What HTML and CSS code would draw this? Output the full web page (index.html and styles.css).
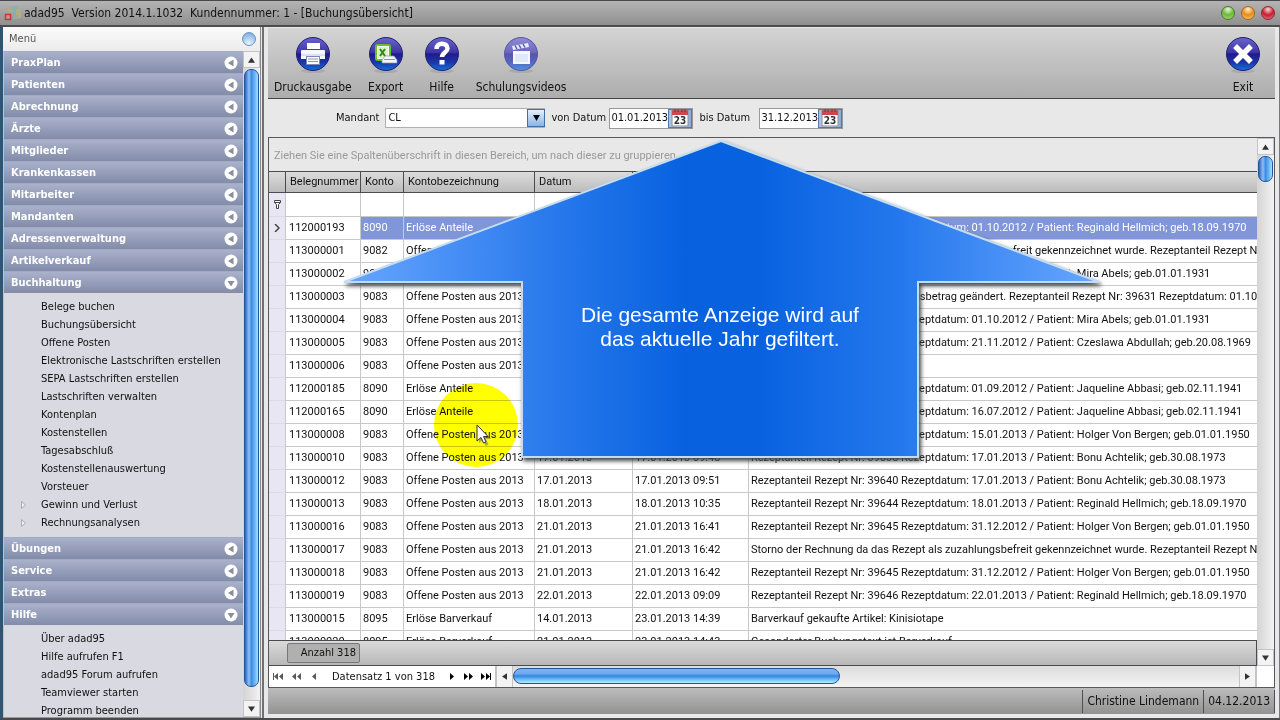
FILE: index.html
```html
<!DOCTYPE html>
<html lang="de">
<head>
<meta charset="utf-8">
<title>adad95 - Buchungsübersicht</title>
<link rel="stylesheet" href="styles.css">
</head>
<body>
<svg class="defs" aria-hidden="true">
  <defs>
    <linearGradient id="orb" x1="0" y1="0" x2="0" y2="1">
      <stop offset="0" stop-color="#6a66c8"/><stop offset=".45" stop-color="#3d35a6"/>
      <stop offset=".5" stop-color="#211a8c"/><stop offset=".75" stop-color="#1a36a8"/><stop offset="1" stop-color="#1670d8"/>
    </linearGradient>
    <symbol id="left" viewBox="0 0 14 14"><circle cx="7" cy="7" r="6.500" fill="#fff"/><path d="M9.500 3.500v7L4 7z" fill="#8a8e9c"/></symbol>
    <symbol id="down" viewBox="0 0 14 14"><circle cx="7" cy="7" r="6.500" fill="#fff"/><path d="M3.500 5h7L7 10.500z" fill="#8a8e9c"/></symbol>
    <symbol id="cal" viewBox="0 0 18 18">
      <rect x="1" y="1.500" width="16" height="15.500" fill="#fff" stroke="#8a8a92"/>
      <path d="M1 1.500h16v4.500H1z" fill="#d0464a"/><path d="M4 0v3M7 0v3M11 0v3M14 0v3" stroke="#7d3034"/>
      <text x="9" y="15" text-anchor="middle" class="cal-text">23</text>
    </symbol>
  </defs>
</svg>

<header class="titlebar">
  <svg class="logo" width="18" height="18" viewBox="0 0 18 18"><path d="M6 3l7-1 1 7H6z" fill="#84b3b4"/><path d="M12 5h5v9h-5z" fill="#b5ae84"/><path d="M3 3h5v5H3z" fill="#c0a488"/><rect x="1.500" y="10.500" width="5" height="5" fill="#b99" stroke="#c23a3a" stroke-width="1.500"/><path d="M9 11h5v4H9z" fill="#93ac9c"/></svg>
  <h1>adad95&nbsp; Version 2014.1.1032&nbsp; Kundennummer: 1 - [Buchungsübersicht]</h1>
  <button class="dot green" aria-label="Minimieren"></button>
  <button class="dot amber" aria-label="Maximieren"></button>
  <button class="dot red" aria-label="Schließen"></button>
</header>

<div class="workspace">
  <aside class="sidebar">
    <div class="side-head"><span>Menü</span><span class="pin"></span></div>
    <div class="side-body">
      <nav class="menu">
        <button class="group">PraxPlan<svg><use href="#left"/></svg></button>
        <button class="group">Patienten<svg><use href="#left"/></svg></button>
        <button class="group">Abrechnung<svg><use href="#left"/></svg></button>
        <button class="group">Ärzte<svg><use href="#left"/></svg></button>
        <button class="group">Mitglieder<svg><use href="#left"/></svg></button>
        <button class="group">Krankenkassen<svg><use href="#left"/></svg></button>
        <button class="group">Mitarbeiter<svg><use href="#left"/></svg></button>
        <button class="group">Mandanten<svg><use href="#left"/></svg></button>
        <button class="group">Adressenverwaltung<svg><use href="#left"/></svg></button>
        <button class="group">Artikelverkauf<svg><use href="#left"/></svg></button>
        <button class="group">Buchhaltung<svg><use href="#down"/></svg></button>
        <ul>
          <li><a href="#">Belege buchen</a></li>
          <li><a href="#">Buchungsübersicht</a></li>
          <li><a href="#">Offene Posten</a></li>
          <li><a href="#">Elektronische Lastschriften erstellen</a></li>
          <li><a href="#">SEPA Lastschriften erstellen</a></li>
          <li><a href="#">Lastschriften verwalten</a></li>
          <li><a href="#">Kontenplan</a></li>
          <li><a href="#">Kostenstellen</a></li>
          <li><a href="#">Tagesabschluß</a></li>
          <li><a href="#">Kostenstellenauswertung</a></li>
          <li><a href="#">Vorsteuer</a></li>
          <li class="sub"><svg width="5" height="8" viewBox="0 0 5 8"><path d="M.5.5v7L4.500 4z" fill="#eee" stroke="#aaadb5"/></svg><a href="#">Gewinn und Verlust</a></li>
          <li class="sub"><svg width="5" height="8" viewBox="0 0 5 8"><path d="M.5.5v7L4.500 4z" fill="#eee" stroke="#aaadb5"/></svg><a href="#">Rechnungsanalysen</a></li>
        </ul>
        <button class="group">Übungen<svg><use href="#left"/></svg></button>
        <button class="group">Service<svg><use href="#left"/></svg></button>
        <button class="group">Extras<svg><use href="#left"/></svg></button>
        <button class="group">Hilfe<svg><use href="#down"/></svg></button>
        <ul>
          <li><a href="#">Über adad95</a></li>
          <li><a href="#">Hilfe aufrufen F1</a></li>
          <li><a href="#">adad95 Forum aufrufen</a></li>
          <li><a href="#">Teamviewer starten</a></li>
          <li><a href="#">Programm beenden</a></li>
        </ul>
      </nav>
      <div class="vscroll">
        <button aria-label="Nach oben"><svg width="7" height="6" viewBox="0 0 8 6"><path d="M0 6h8L4 0z"/></svg></button>
        <div class="track"><div class="thumb long"></div></div>
        <button aria-label="Nach unten"><svg width="7" height="6" viewBox="0 0 8 6"><path d="M0 0h8L4 6z"/></svg></button>
      </div>
    </div>
  </aside>

  <main class="content">
    <div class="toolbar">
      <button class="tool"><svg width="36" height="38" viewBox="0 0 36 38"><ellipse cx="18" cy="35" rx="12" ry="2" fill="#aaa"/><circle cx="18" cy="18" r="16.500" fill="url(#orb)" stroke="#232070"/>
        <rect x="12" y="7" width="13" height="6" fill="#fff"/><path d="M7 14h22q1 0 1 1v8H6v-8q0-1 1-1z" fill="#f4f7fb"/><path d="M6 19h24" stroke="#c3cbe0"/><rect x="11.500" y="20.500" width="13" height="8" fill="#fff" stroke="#7b88b8"/><path d="M13 23h10M13 25.500h10" stroke="#8a93b0"/></svg>Druckausgabe</button>
      <button class="tool"><svg width="36" height="38" viewBox="0 0 36 38"><ellipse cx="18" cy="35" rx="12" ry="2" fill="#aaa"/><circle cx="18" cy="18" r="16.500" fill="url(#orb)" stroke="#232070"/>
        <rect x="8" y="9" width="14" height="15" rx="1.500" fill="#fff" stroke="#62c428" stroke-width="2"/><path d="M10 11h10v11H10z" fill="#d9f5c0"/><path d="M12 13l5 7M17 13l-5 7" stroke="#2a8a1c" stroke-width="2"/><path d="M14 24l3-4h9l3 4v3H14z" fill="#f5f5f5" stroke="#8893b5" stroke-width=".7"/><path d="M16 23.500h11" stroke="#8893b5"/></svg>Export</button>
      <button class="tool"><svg width="36" height="38" viewBox="0 0 36 38"><ellipse cx="18" cy="35" rx="12" ry="2" fill="#aaa"/><circle cx="18" cy="18" r="16.500" fill="url(#orb)" stroke="#232070"/>
        <path d="M12.500 13c0-7 11-7 11-.5 0 4-5.500 4-5.500 8.500" fill="none" stroke="#fff" stroke-width="4.500"/><path d="M15.500 24h5v4.500h-5z" fill="#fff"/></svg>Hilfe</button>
      <button class="tool"><svg width="36" height="38" viewBox="0 0 36 38"><ellipse cx="18" cy="35" rx="12" ry="2" fill="#aaa"/><circle cx="18" cy="18" r="16.500" fill="url(#orb)" stroke="#5a58a8"/><circle cx="18" cy="18" r="16" fill="#fff" opacity=".25"/>
        <path d="M10 15h17v13H10z" fill="#f5f7ff"/><path d="M12 18h13v8H12z" fill="#dfe8fb"/><path d="M9 10l16-3 1 4-16 3z" fill="#e8eaff"/><path d="M12 9.500l2 3.500M16 9l2 3.500M20 8l2 3.500" stroke="#5b57b5" stroke-width="1.500"/></svg>Schulungsvideos</button>
      <span class="spacer"></span>
      <button class="tool"><svg width="36" height="38" viewBox="0 0 36 38"><ellipse cx="18" cy="35" rx="12" ry="2" fill="#aaa"/><circle cx="18" cy="18" r="16.500" fill="url(#orb)" stroke="#232070"/>
        <path d="M12 12l12 12M24 12L12 24" stroke="#fff" stroke-width="5.500" stroke-linecap="square"/></svg>Exit</button>
    </div>

    <form class="filters">
      <label for="mandant">Mandant</label>
      <span class="combo"><select id="mandant"><option>CL</option></select><span class="drop"><svg width="7" height="6" viewBox="0 0 8 7"><path d="M0 0h8L4 7z"/></svg></span></span>
      <label for="von" class="von">von Datum</label>
      <span class="date"><input id="von" value="01.01.2013"><button type="button" aria-label="Kalender"><svg width="18" height="18"><use href="#cal"/></svg></button></span>
      <label for="bis" class="bis">bis Datum</label>
      <span class="date"><input id="bis" value="31.12.2013"><button type="button" aria-label="Kalender"><svg width="18" height="18"><use href="#cal"/></svg></button></span>
    </form>

    <section class="grid">
      <div class="grid-main">
        <div class="grid-left">
          <div class="group-panel">Ziehen Sie eine Spaltenüberschrift in diesen Bereich, um nach dieser zu gruppieren</div>
          <div class="table-wrap">
            <table>
              <colgroup><col class="c-ind"><col class="c-beleg"><col class="c-konto"><col class="c-bez"><col class="c-datum"><col class="c-zeit"><col></colgroup>
              <thead><tr><th></th><th>Belegnummer</th><th>Konto</th><th>Kontobezeichnung</th><th>Datum</th><th></th><th></th></tr></thead>
              <tbody>
                <tr class="filter"><td><svg width="7" height="9" viewBox="0 0 7 9"><path d="M.5.5h6v2l-2 2v4h-2v-4l-2-2zM.5 2.500h6" fill="#fff" stroke="#444"/></svg></td><td></td><td></td><td></td><td></td><td></td><td></td></tr>
                <tr class="selected"><td><svg width="6" height="8" viewBox="0 0 6 8"><path d="M1 0l4 4-4 4" fill="none" stroke="#444" stroke-width="1.500"/></svg></td><td>112000193</td><td>8090</td><td>Erlöse Anteile</td><td></td><td></td><td>Rezeptanteil Rezept Nr: 39631 Rezeptdatum: 01.10.2012 / Patient: Reginald Hellmich; geb.18.09.1970</td></tr>
                <tr><td></td><td>113000001</td><td>9082</td><td>Offene Posten aus 2012</td><td></td><td></td><td>Storno der Rechnung da das Rezept als zuzahlungsbefreit gekennzeichnet wurde. Rezeptanteil Rezept Nr: 39631</td></tr>
                <tr><td></td><td>113000002</td><td>9083</td><td>Offene Posten aus 2013</td><td></td><td></td><td>Rezeptanteil Rezept Nr: 39631 Rezeptdatum: 01.10.2012 / Patient: Mira Abels; geb.01.01.1931</td></tr>
                <tr><td></td><td>113000003</td><td>9083</td><td>Offene Posten aus 2013</td><td></td><td></td><td>Storno der Rechnung da Rechnungsbetrag geändert. Rezeptanteil Rezept Nr: 39631 Rezeptdatum: 01.10.2012</td></tr>
                <tr><td></td><td>113000004</td><td>9083</td><td>Offene Posten aus 2013</td><td></td><td></td><td>Rezeptanteil Rezept Nr: 39631 Rezeptdatum: 01.10.2012 / Patient: Mira Abels; geb.01.01.1931</td></tr>
                <tr><td></td><td>113000005</td><td>9083</td><td>Offene Posten aus 2013</td><td></td><td></td><td>Rezeptanteil Rezept Nr: 39632 Rezeptdatum: 21.11.2012 / Patient: Czeslawa Abdullah; geb.20.08.1969</td></tr>
                <tr><td></td><td>113000006</td><td>9083</td><td>Offene Posten aus 2013</td><td></td><td></td><td></td></tr>
                <tr><td></td><td>112000185</td><td>8090</td><td>Erlöse Anteile</td><td></td><td></td><td>Rezeptanteil Rezept Nr: 39633 Rezeptdatum: 01.09.2012 / Patient: Jaqueline Abbasi; geb.02.11.1941</td></tr>
                <tr><td></td><td>112000165</td><td>8090</td><td>Erlöse Anteile</td><td></td><td></td><td>Rezeptanteil Rezept Nr: 39634 Rezeptdatum: 16.07.2012 / Patient: Jaqueline Abbasi; geb.02.11.1941</td></tr>
                <tr><td></td><td>113000008</td><td>9083</td><td>Offene Posten aus 2013</td><td></td><td></td><td>Rezeptanteil Rezept Nr: 39637 Rezeptdatum: 15.01.2013 / Patient: Holger Von Bergen; geb.01.01.1950</td></tr>
                <tr><td></td><td>113000010</td><td>9083</td><td>Offene Posten aus 2013</td><td>17.01.2013</td><td>17.01.2013 09:48</td><td>Rezeptanteil Rezept Nr: 39638 Rezeptdatum: 17.01.2013 / Patient: Bonu Achtelik; geb.30.08.1973</td></tr>
                <tr><td></td><td>113000012</td><td>9083</td><td>Offene Posten aus 2013</td><td>17.01.2013</td><td>17.01.2013 09:51</td><td>Rezeptanteil Rezept Nr: 39640 Rezeptdatum: 17.01.2013 / Patient: Bonu Achtelik; geb.30.08.1973</td></tr>
                <tr><td></td><td>113000013</td><td>9083</td><td>Offene Posten aus 2013</td><td>18.01.2013</td><td>18.01.2013 10:35</td><td>Rezeptanteil Rezept Nr: 39644 Rezeptdatum: 18.01.2013 / Patient: Reginald Hellmich; geb.18.09.1970</td></tr>
                <tr><td></td><td>113000016</td><td>9083</td><td>Offene Posten aus 2013</td><td>21.01.2013</td><td>21.01.2013 16:41</td><td>Rezeptanteil Rezept Nr: 39645 Rezeptdatum: 31.12.2012 / Patient: Holger Von Bergen; geb.01.01.1950</td></tr>
                <tr><td></td><td>113000017</td><td>9083</td><td>Offene Posten aus 2013</td><td>21.01.2013</td><td>21.01.2013 16:42</td><td>Storno der Rechnung da das Rezept als zuzahlungsbefreit gekennzeichnet wurde. Rezeptanteil Rezept Nr: 39645</td></tr>
                <tr><td></td><td>113000018</td><td>9083</td><td>Offene Posten aus 2013</td><td>21.01.2013</td><td>21.01.2013 16:42</td><td>Rezeptanteil Rezept Nr: 39645 Rezeptdatum: 31.12.2012 / Patient: Holger Von Bergen; geb.01.01.1950</td></tr>
                <tr><td></td><td>113000019</td><td>9083</td><td>Offene Posten aus 2013</td><td>22.01.2013</td><td>22.01.2013 09:09</td><td>Rezeptanteil Rezept Nr: 39646 Rezeptdatum: 22.01.2013 / Patient: Reginald Hellmich; geb.18.09.1970</td></tr>
                <tr><td></td><td>113000015</td><td>8095</td><td>Erlöse Barverkauf</td><td>14.01.2013</td><td>23.01.2013 14:39</td><td>Barverkauf gekaufte Artikel: Kinisiotape</td></tr>
                <tr><td></td><td>113000020</td><td>8095</td><td>Erlöse Barverkauf</td><td>21.01.2013</td><td>23.01.2013 14:43</td><td>Gesonderter Buchungstext ist Barverkauf</td></tr>
              </tbody>
            </table>
          </div>
          <div class="summary"><span>Anzahl 318</span></div>
        </div>
        <div class="vscroll">
          <button aria-label="Nach oben"><svg width="7" height="6" viewBox="0 0 8 6"><path d="M0 6h8L4 0z"/></svg></button>
          <div class="track"><div class="thumb short"></div></div>
          <button aria-label="Nach unten"><svg width="7" height="6" viewBox="0 0 8 6"><path d="M0 0h8L4 6z"/></svg></button>
        </div>
      </div>
      <div class="navigator">
        <div class="records">
          <button class="dim" aria-label="Erster"><svg width="10" height="7"><path d="M0 0h1v7H0zM5 0v7L1 3.500zM10 0v7L6 3.500z"/></svg></button>
          <button class="dim" aria-label="Seite zurück"><svg width="10" height="7"><path d="M5 0v7L1 3.500zM10 0v7L6 3.500z"/></svg></button>
          <button class="dim" aria-label="Zurück"><svg width="10" height="7"><path d="M7 0v7L3 3.500z"/></svg></button>
          <span>Datensatz 1 von 318</span>
          <button aria-label="Weiter"><svg width="10" height="7"><path d="M3 0v7l4-3.500z"/></svg></button>
          <button aria-label="Seite vor"><svg width="10" height="7"><path d="M0 0v7l4-3.500zM5 0v7l4-3.500z"/></svg></button>
          <button aria-label="Letzter"><svg width="10" height="7"><path d="M0 0v7l4-3.500zM5 0v7l4-3.500zM9 0h1v7H9z"/></svg></button>
        </div>
        <div class="hscroll">
          <button aria-label="Nach links"><svg width="5" height="7" viewBox="0 0 6 8"><path d="M6 0v8L0 4z"/></svg></button>
          <div class="htrack"><div class="hthumb"></div></div>
          <button aria-label="Nach rechts"><svg width="5" height="7" viewBox="0 0 6 8"><path d="M0 0v8l6-4z"/></svg></button>
        </div>
      </div>
    </section>

    <footer class="statusbar"><span>Christine Lindemann</span><span>04.12.2013</span></footer>

    <svg class="spot" width="84" height="86" viewBox="0 0 84 86"><ellipse cx="42" cy="43" rx="42" ry="42" fill="#ff0"/></svg>
    <svg class="cursor" width="16" height="22" viewBox="0 0 16 22"><path d="M3 3v16l4-3 2.500 6 3-1.500-2.500-5.500h5z" fill="#777" opacity=".6"/><path d="M1 1v16l4-3.500 2.500 5.500 2.500-1-2.500-5.500H12z" fill="#fff" stroke="#333"/></svg>
    <div class="callout">
      <svg width="768" height="328" viewBox="0 0 768 328">
        <defs><linearGradient id="blue"><stop offset="0" stop-color="#68a6ff"/><stop offset=".27" stop-color="#2a7aec"/><stop offset=".45" stop-color="#0862e0"/><stop offset=".55" stop-color="#0862e0"/><stop offset=".73" stop-color="#2377ec"/><stop offset="1" stop-color="#68a6ff"/></linearGradient></defs>
        <path class="arrow" d="M381 4L759 145H578v175H182V145H4z"/>
      </svg>
      <p>Die gesamte Anzeige wird auf<br>das aktuelle Jahr gefiltert.</p>
    </div>
  </main>
</div>
</body>
</html>
```
FILE: styles.css
```css
* { box-sizing: border-box; }
body { margin: 0; height: 100vh; display: flex; flex-direction: column; overflow: hidden; background: #e8e8e8; color: #111; font: 11px/18px "DejaVu Sans Condensed", "DejaVu Sans", sans-serif; border-bottom: 2px solid #4a4a4e; }
button { font: inherit; color: inherit; border: 0; padding: 0; margin: 0; background: none; }
svg { display: block; flex: none; }
.defs { position: absolute; width: 0; height: 0; }
.cal-text { font: bold 10px "DejaVu Sans Condensed", sans-serif; fill: #333; }

.titlebar { height: 27px; flex: none; display: flex; align-items: center; gap: 6px; padding: 0 5px 0 4px; background: linear-gradient(#b4b4b4, #909090); border-top: 1px solid #48484c; border-bottom: 2px solid #4d4d50; }
.titlebar h1 { flex: 1; margin: 0; font-size: 12px; font-weight: normal; }
.titlebar .logo { margin-right: -4px; }
.dot { width: 14px; height: 14px; border-radius: 7px; border: 1px solid; }
.green { background: radial-gradient(circle at 50% 20%, #e9f8d8, #6cb83a 50%, #b8e07a); border-color: #3f7a30; }
.amber { background: radial-gradient(circle at 50% 20%, #fff0cc, #e88c18 50%, #ffd478); border-color: #a8641c; }
.red { background: radial-gradient(circle at 50% 20%, #fbd6da, #c81c30 50%, #f08088); border-color: #8c2430; }

.workspace { flex: 1; min-height: 0; display: flex; border-left: 3px solid #2e5672; border-right: 1px solid #77777c; }
.sidebar { width: 258px; flex: none; display: flex; flex-direction: column; border-right: 1px solid #8b8b8f; border-bottom: 1px solid #999; }
.side-head { height: 24px; flex: none; display: flex; align-items: center; justify-content: space-between; padding: 0 4px 0 6px; background: linear-gradient(#fafafa, #ececec); color: #555; }
.pin { width: 14px; height: 14px; border-radius: 7px; border: 1px solid #6b92c4; background: radial-gradient(circle at 50% 90%, #eaf6ff, #6ea4dc); }
.side-body { flex: 1; min-height: 0; display: flex; }
.menu { flex: 1; overflow: hidden; background: #d8d9e1; border-left: 1px solid #c0c2cc; }
.group { width: 100%; height: 22px; display: flex; align-items: center; justify-content: space-between; padding: 0 5px 0 7px; text-align: left; font-weight: bold; color: #fff; background: linear-gradient(#a9b1cb, #828ba8); border-top: 1px solid #a2aac4; }
.group svg { width: 14px; height: 14px; }
.menu ul { list-style: none; margin: 0; padding: 5px 0; }
.menu li { height: 18px; padding-left: 37px; white-space: nowrap; }
.menu a { color: #111; text-decoration: none; }
.menu .sub { display: flex; align-items: center; gap: 15px; padding-left: 17px; }

.vscroll { width: 17px; flex: none; display: flex; flex-direction: column; background: linear-gradient(90deg, #d4d4d4, #f2f2f2); }
.vscroll button { height: 17px; flex: none; display: flex; align-items: center; justify-content: center; background: #f3f3f3; border: 1px solid #c4c4c8; }
.vscroll path, .hscroll path { fill: #333; }
.track { flex: 1; padding: 1px; display: flex; flex-direction: column; }
.thumb { border: 1px solid #24549a; border-radius: 7px; background: linear-gradient(90deg, #2a62c0, #8cc0f4 30%, #3f8ce4 50%, #6ab4f4 75%, #a8e0ff); }
.long { flex: 1; margin-bottom: 12px; }
.short { height: 26px; }

.content { flex: 1; min-width: 0; position: relative; display: flex; flex-direction: column; margin-left: 1px; padding: 1px 4px 4px; border-left: 2px solid #707074; }
.toolbar { height: 71px; flex: none; display: flex; padding-right: 4px; background: linear-gradient(#d4d4d4, #adadad); border-bottom: 1px solid #444; }
.tool { min-width: 56px; padding: 8px 6px 0; display: flex; flex-direction: column; align-items: center; gap: 4px; font-size: 12px; }
.spacer { flex: 1; }

.filters { height: 38px; flex: none; display: flex; align-items: center; padding-left: 68px; }
.combo { position: relative; width: 160px; margin: 0 6px 0 6px; }
.combo select { width: 100%; height: 20px; padding: 0 2px; appearance: none; font: inherit; color: #111; background: #fff; border: 1px solid #b0b0b0; border-radius: 0; }
.drop { position: absolute; top: 1px; right: 0; width: 18px; height: 18px; display: flex; align-items: center; justify-content: center; border: 1px solid #3f6ea8; background: linear-gradient(#e4f0fc, #88b4e4); pointer-events: none; }
.von { width: 58px; }
.date { width: 84px; height: 21px; display: flex; background: #fff; border: 1px solid #999; }
.date input { flex: 1; min-width: 0; padding: 0 0 0 1px; border: 0; background: none; font: inherit; color: #111; }
.date button { width: 24px; display: flex; align-items: center; justify-content: center; background: linear-gradient(90deg, #a4c0e0, #e0ecf8, #84aad4); border: 1px solid #567ba8; }
.bis { width: 60px; margin-left: 6px; }

.grid { flex: 1; min-height: 0; display: flex; flex-direction: column; border: 1px solid #58585c; }
.grid-main { flex: 1; min-height: 0; display: flex; }
.grid-left { flex: 1; min-width: 0; display: flex; flex-direction: column; }
.group-panel { height: 33px; flex: none; padding-left: 5px; line-height: 35px; color: #999; font-family: Roboto, sans-serif; }
.table-wrap { flex: 1; min-height: 0; overflow: hidden; background: #fff; }
table { width: 100%; table-layout: fixed; border-collapse: separate; border-spacing: 0; font-family: Roboto, sans-serif; }
.c-ind { width: 17px; }
.c-beleg { width: 75px; }
.c-konto { width: 43px; }
.c-bez { width: 131px; }
.c-datum { width: 98px; }
.c-zeit { width: 116px; }
th { height: 22px; padding: 0 4px; text-align: left; font-weight: normal; background: linear-gradient(#dcdcdc, #bcbcbc); border: solid #4c4c50; border-width: 1px 1px 1px 0; }
th:last-child { border-right: 0; }
td { height: 23px; padding: 0 2px; white-space: nowrap; overflow: hidden; border: solid #c8c8c8; border-width: 0 1px 1px 0; }
td:last-child { border-right: 0; padding-right: 0; }
td:first-child { background: #e7e6f2; border-bottom-color: #dcdbe8; padding: 0 5px; }
td:nth-child(2) { padding-left: 3px; }
.filter td { height: 24px; }
.selected td:nth-child(n+3) { background: #8096d8; color: #fff; }
.summary { height: 26px; flex: none; display: flex; align-items: center; padding-left: 18px; background: linear-gradient(#dadada, #b8b8b8); border: 1px solid #4c4c50; border-left: 0; }
.summary span { width: 73px; height: 20px; padding-right: 3px; text-align: right; background: #b0b0b0; border: 1px solid #77777a; border-radius: 2px; }

.navigator { height: 21px; flex: none; display: flex; background: #fff; }
.records { width: 226px; display: flex; align-items: center; padding-left: 4px; gap: 8px; }
.records span { margin: 0 4px 0 5px; }
.records .dim { opacity: .65; }
.records button:nth-of-type(n+5) { margin-left: -1px; }
.hscroll { flex: 1; display: flex; margin-right: 17px; border: solid #c4c4c8; border-width: 0 1px; background: linear-gradient(#dcdcdc, #f4f4f4); }
.hscroll button { width: 17px; display: flex; align-items: center; justify-content: center; background: #f3f3f3; border: solid #c4c4c8; border-width: 0 1px; }
.htrack { flex: 1; padding: 2px 0; }
.hthumb { width: 45%; height: 16px; border: 1px solid #24549a; border-radius: 8px; background: linear-gradient(#80b4f4, #6aa8f0 35%, #3584e0 50%, #6cc0f4 75%, #b4ecff); }

.statusbar { height: 26px; flex: none; display: flex; justify-content: flex-end; align-items: center; background: linear-gradient(#bcbcbc, #929292); font-size: 12px; }
.statusbar span { height: 23px; padding: 0 4px; line-height: 23px; border-left: 1px solid #505054; }
.statusbar span:last-child { border-right: 1px solid #505054; }

.spot { position: absolute; left: 170px; top: 355px; mix-blend-mode: multiply; }
.cursor { position: absolute; left: 212px; top: 397px; }
.callout { position: absolute; left: 76px; top: 110px; width: 768px; }
.callout p { position: absolute; left: 182px; top: 166px; width: 396px; margin: 0; text-align: center; color: #fff; font: 21px/24px "Liberation Sans", Arial, sans-serif; }
.arrow { fill: url(#blue); stroke: #c4dcf0; stroke-width: 2px; filter: drop-shadow(2px 3px 2px #444); }
```
